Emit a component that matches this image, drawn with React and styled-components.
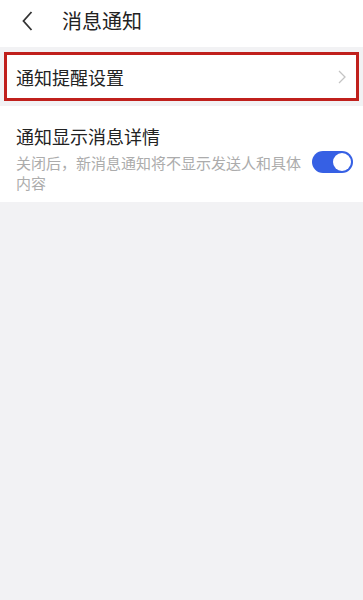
import React, { useState } from "react";
import styled, { createGlobalStyle } from "styled-components";

const Global = createGlobalStyle`
  html, body { margin: 0; padding: 0; background: #f2f2f4; }
  body { font-family: "Noto Sans CJK SC", "Noto Sans", sans-serif; }
`;

const Page = styled.div`
  width: 363px;
  min-height: 600px;
  background: #f2f2f4;
`;

const Header = styled.div`
  height: 47px;
  background: #fff;
  display: flex;
  align-items: center;
  padding-left: 22px;
  gap: 29px;
  margin-bottom: 5px;
`;

const Title = styled.div`
  font-size: 20px;
  color: #222;
  line-height: 1;
  margin-top: -6px;
`;

const Highlight = styled.div`
  margin: 0 4px;
  border: 3px solid #c0201c;
  background: #fff;
  height: 43px;
  display: flex;
  align-items: center;
  justify-content: space-between;
  padding: 0 10px 0 9px;
`;

const RowLabel = styled.div`
  font-size: 18px;
  line-height: 26px;
  color: #222;
`;

const Toggle = styled.button`
  width: 41px;
  height: 22px;
  border-radius: 11px;
  border: none;
  padding: 0;
  margin-top: 8px;
  background: ${({ $on }) => ($on ? "#3660e4" : "#ccc")};
  position: relative;
  flex-shrink: 0;
  &::after {
    content: "";
    position: absolute;
    top: 2px;
    left: ${({ $on }) => ($on ? "21px" : "2px")};
    width: 18px;
    height: 18px;
    border-radius: 50%;
    background: #fff;
  }
`;

const Card = styled.div`
  margin-top: 5px;
  background: #fff;
  display: flex;
  align-items: center;
  padding: 17px 10px 9px 16px;
  gap: 6px;
`;

const CardText = styled.div`
  flex: 1;
  display: flex;
  flex-direction: column;
  gap: 4px;
`;

const Sub = styled.div`
  font-size: 15px;
  line-height: 20px;
  color: #acacac;
`;

function Back() {
  return (
    <svg width="11" height="20" viewBox="0 0 11 20" style={{ marginTop: -6 }}>
      <path d="M9.5 1 L1.5 10 L9.5 19" fill="none" stroke="#333" strokeWidth="1.8" />
    </svg>
  );
}

function Chevron() {
  return (
    <svg width="8" height="14" viewBox="0 0 8 14">
      <path d="M1 1 L7 7 L1 13" fill="none" stroke="#c4c4c4" strokeWidth="1.3" />
    </svg>
  );
}

export default function App() {
  const [on, setOn] = useState(true);
  return (
    <Page>
      <Global />
      <Header>
        <Back />
        <Title>消息通知</Title>
      </Header>
      <Highlight>
        <RowLabel>通知提醒设置</RowLabel>
        <Chevron />
      </Highlight>
      <Card>
        <CardText>
          <RowLabel>通知显示消息详情</RowLabel>
          <Sub>关闭后，新消息通知将不显示发送人和具体内容</Sub>
        </CardText>
        <Toggle $on={on} onClick={() => setOn(!on)} />
      </Card>
    </Page>
  );
}
